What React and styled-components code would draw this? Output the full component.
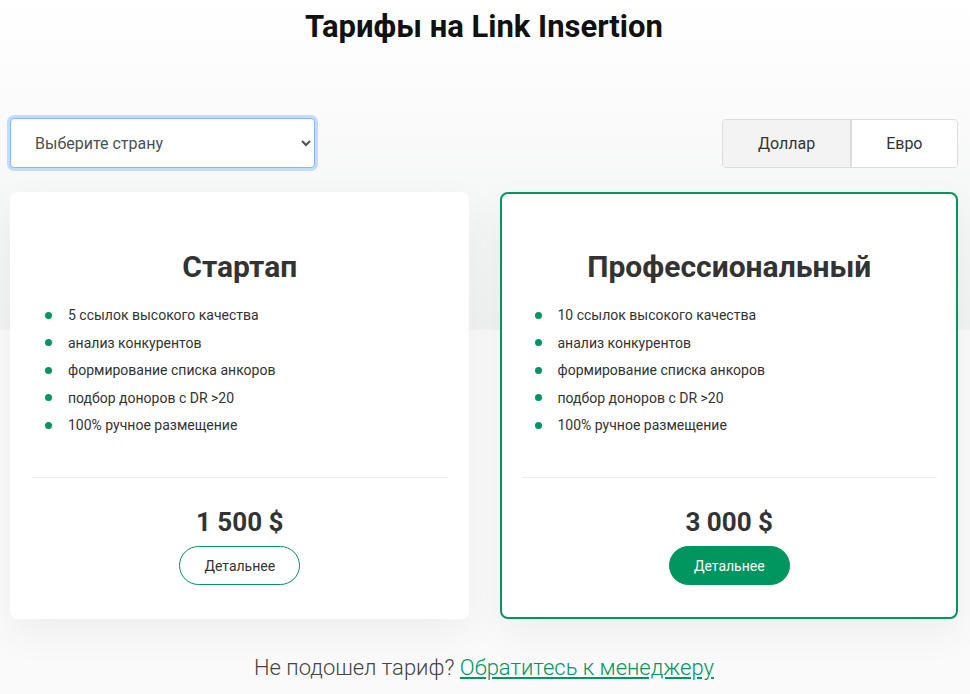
import React, { useState } from 'react';
import styled, { createGlobalStyle } from 'styled-components';

const GREEN = '#01955f';

const GlobalStyle = createGlobalStyle`
  html, body {
    margin: 0;
    padding: 0;
  }
  body {
    font-family: Roboto, 'Liberation Sans', Arial, sans-serif;
    color: #333;
    background: linear-gradient(to bottom, #ffffff 0, #f1f2f2 330px, #fafafa 330px, #fafafa 100%);
    min-height: 694px;
  }
`;

const plans = [
  {
    name: 'Стартап',
    items: ['5 ссылок высокого качества', 'анализ конкурентов', 'формирование списка анкоров', 'подбор доноров с DR >20', '100% ручное размещение'],
    price: { usd: '1 500 $', eur: '1 400 €' },
    featured: false,
  },
  {
    name: 'Профессиональный',
    items: ['10 ссылок высокого качества', 'анализ конкурентов', 'формирование списка анкоров', 'подбор доноров с DR >20', '100% ручное размещение'],
    price: { usd: '3 000 $', eur: '2 800 €' },
    featured: true,
  },
];

const App = () => {
  const [currency, setCurrency] = useState('usd');

  return (
    <>
      <GlobalStyle />
      <Page>
        <Title>Тарифы на Link Insertion</Title>
        <Toolbar>
          <CountrySelect defaultValue="default">
            <option value="default" disabled>Выберите страну</option>
            <option value="ru">Россия</option>
            <option value="ua">Украина</option>
            <option value="kz">Казахстан</option>
          </CountrySelect>
          <Toggle>
            <ToggleButton active={currency === 'usd'} onClick={() => setCurrency('usd')}>Доллар</ToggleButton>
            <ToggleButton active={currency === 'eur'} onClick={() => setCurrency('eur')}>Евро</ToggleButton>
          </Toggle>
        </Toolbar>
        <Cards>
          {plans.map(plan => (
            <Card key={plan.name} featured={plan.featured}>
              <PlanName>{plan.name}</PlanName>
              <Features>
                {plan.items.map(item => (
                  <Feature key={item}>{item}</Feature>
                ))}
              </Features>
              <Divider />
              <Price>{plan.price[currency]}</Price>
              <MoreButton featured={plan.featured}>Детальнее</MoreButton>
            </Card>
          ))}
        </Cards>
        <Footer>
          Не подошел тариф? <a href="#manager">Обратитесь к менеджеру</a>
        </Footer>
      </Page>
    </>
  );
};

const Page = styled.div`
  padding: 10px 12px 20px 10px;
  display: flex;
  flex-direction: column;
`;

const Title = styled.h1`
  margin: 0;
  text-align: center;
  font-size: 31px;
  line-height: 34px;
  font-weight: 700;
  color: #111;
`;

const Toolbar = styled.div`
  margin-top: 74px;
  display: flex;
  justify-content: space-between;
  align-items: center;
`;

const CountrySelect = styled.select`
  width: 305px;
  height: 50px;
  padding: 0 8px 0 20px;
  font-family: Roboto, 'Liberation Sans', Arial, sans-serif;
  font-size: 16px;
  color: #495057;
  background: #fff;
  border: 1px solid #86b7fe;
  border-radius: 4px;
  box-shadow: 0 0 0 3px #c2dbfe;
  outline: none;
`;

const Toggle = styled.div`
  display: flex;
  border: 1px solid #dcdcdc;
  border-radius: 4px;
  overflow: hidden;
`;

const ToggleButton = styled.button`
  height: 47px;
  padding: 0 34.5px;
  border: none;
  background: ${p => (p.active ? '#f3f3f3' : '#fff')};
  font-family: Roboto, 'Liberation Sans', Arial, sans-serif;
  font-size: 16px;
  color: #333;
  cursor: pointer;

  & + & {
    border-left: 2px solid #dcdcdc;
  }
`;

const Cards = styled.div`
  margin-top: 24px;
  display: grid;
  grid-template-columns: 1fr 1fr;
  gap: 31px;
`;

const Card = styled.div`
  background: #fff;
  border: 2px solid ${p => (p.featured ? GREEN : 'transparent')};
  border-radius: 8px;
  box-shadow: 0 14px 40px rgba(0, 0, 0, 0.05);
  padding: 56px 19px 32px 20px;
  display: flex;
  flex-direction: column;
  align-items: center;
`;

const PlanName = styled.h2`
  margin: 0;
  font-size: 30px;
  line-height: 34px;
  font-weight: 700;
  color: #333;
`;

const Features = styled.ul`
  align-self: stretch;
  list-style: none;
  margin: 21px 0 0;
  padding: 0 0 0 13px;
  display: flex;
  flex-direction: column;
  gap: 7.5px;
`;

const Feature = styled.li`
  position: relative;
  padding-left: 23px;
  font-size: 14px;
  line-height: 20px;
  color: #333;

  &::before {
    content: '';
    position: absolute;
    left: 0;
    top: 6.5px;
    width: 7px;
    height: 7px;
    border-radius: 50%;
    background: ${GREEN};
  }
`;

const Divider = styled.hr`
  align-self: stretch;
  margin: 42px 0 0;
  border: none;
  border-top: 1px solid #eeeeee;
`;

const Price = styled.div`
  margin-top: 30px;
  font-size: 26px;
  line-height: 29px;
  font-weight: 700;
  color: #333;
`;

const MoreButton = styled.button`
  margin-top: 9px;
  width: 121px;
  height: 39px;
  border-radius: 20px;
  border: 1px solid ${GREEN};
  background: ${p => (p.featured ? GREEN : '#fff')};
  color: ${p => (p.featured ? '#fff' : '#333')};
  font-family: Roboto, 'Liberation Sans', Arial, sans-serif;
  font-size: 14px;
  font-weight: 400;
  cursor: pointer;
`;

const Footer = styled.p`
  margin: 36px 0 0;
  text-align: center;
  font-size: 22px;
  line-height: 26px;
  font-weight: 300;
  color: #444;

  a {
    color: ${GREEN};
    text-decoration: underline;
  }
`;

export default App;
